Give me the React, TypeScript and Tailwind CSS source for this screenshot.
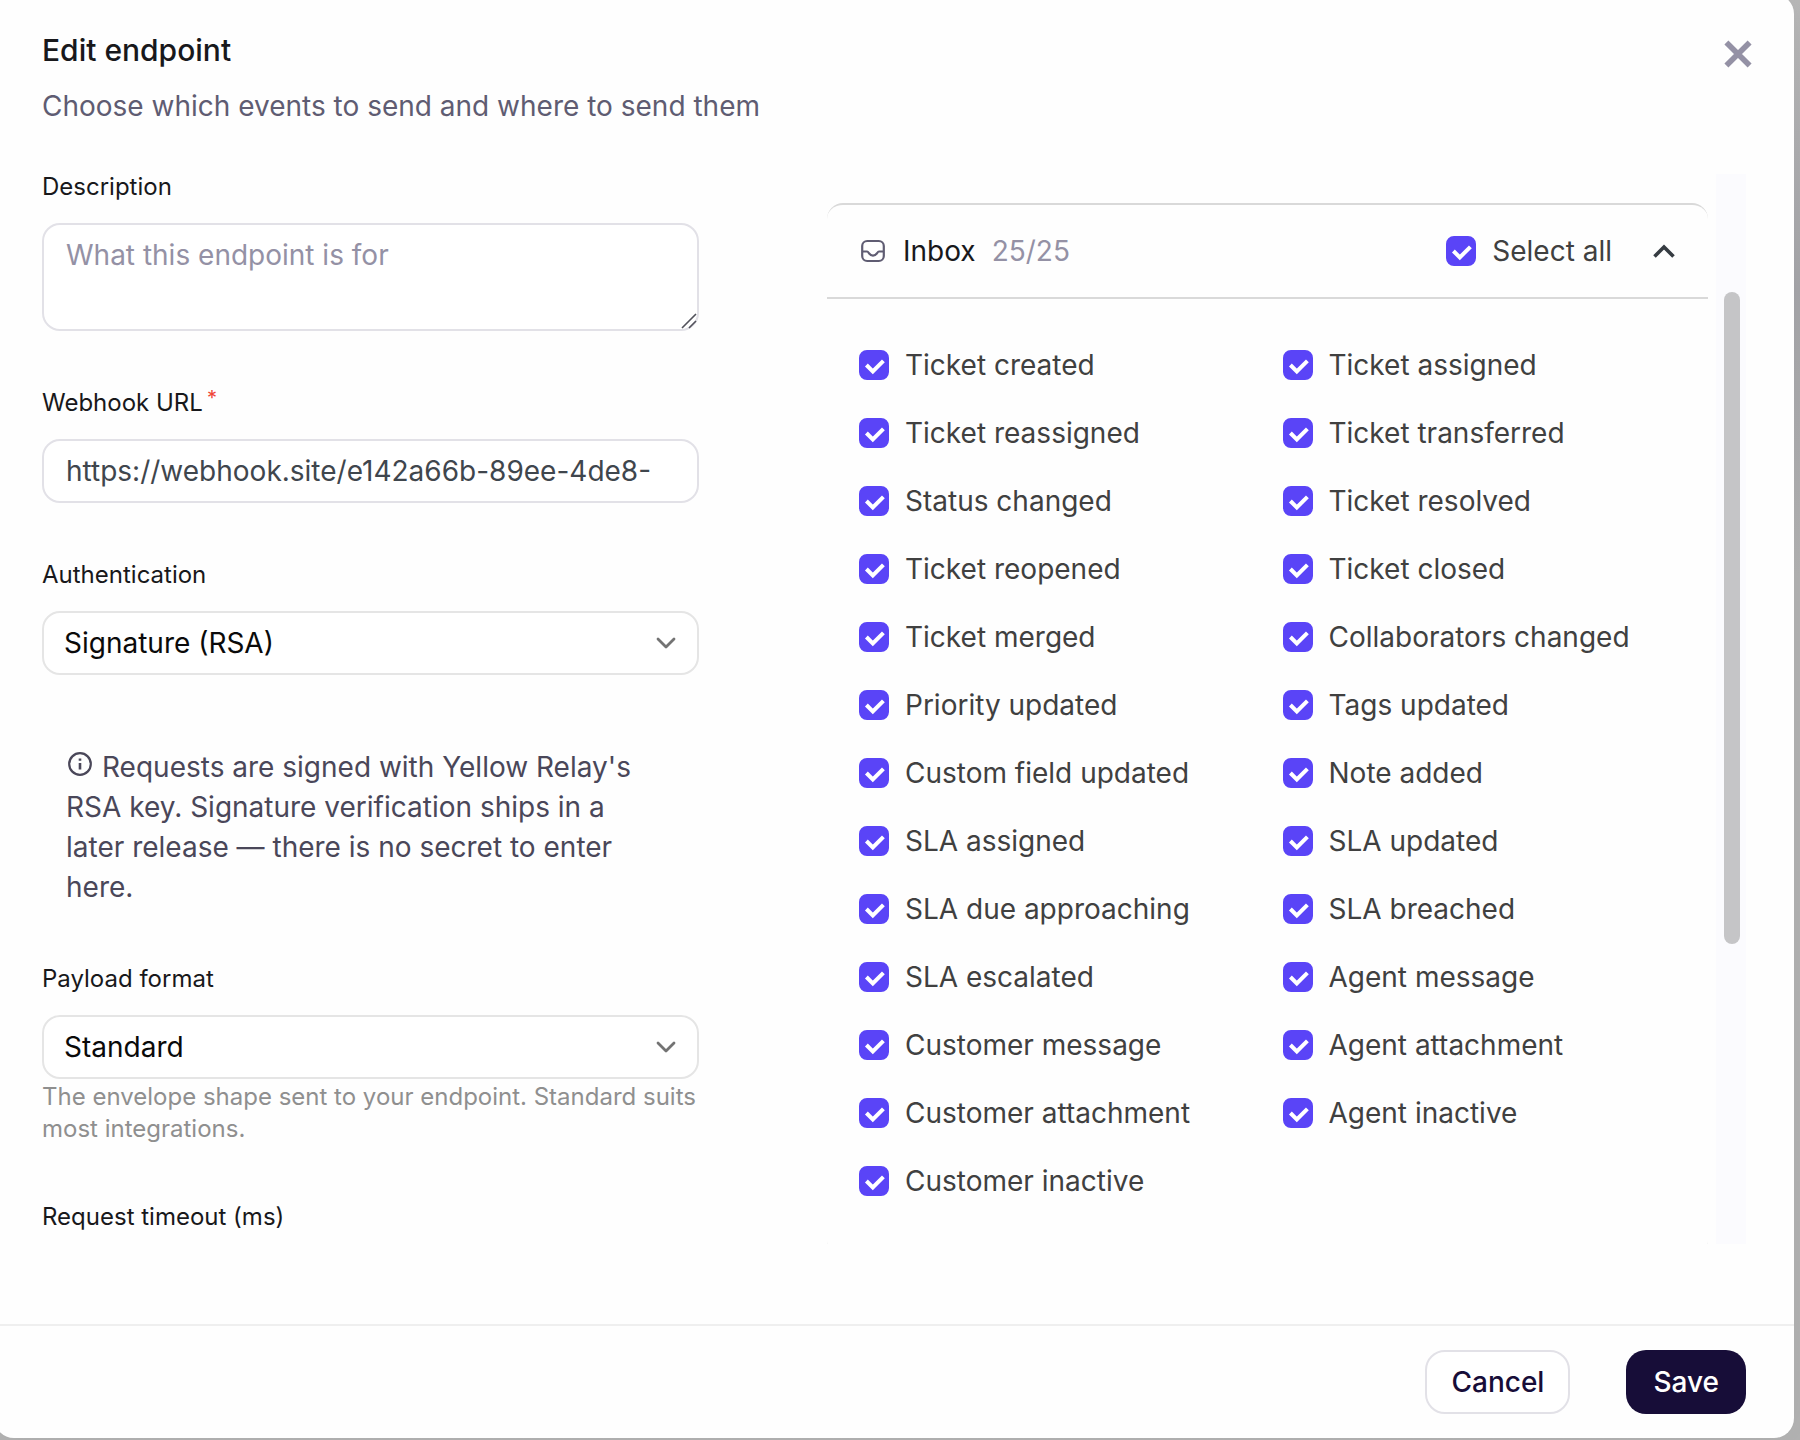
import type { ReactNode } from 'react'
import { useState } from 'react'

const EVENTS = [
  'Ticket created',
  'Ticket assigned',
  'Ticket reassigned',
  'Ticket transferred',
  'Status changed',
  'Ticket resolved',
  'Ticket reopened',
  'Ticket closed',
  'Ticket merged',
  'Collaborators changed',
  'Priority updated',
  'Tags updated',
  'Custom field updated',
  'Note added',
  'SLA assigned',
  'SLA updated',
  'SLA due approaching',
  'SLA breached',
  'SLA escalated',
  'Agent message',
  'Customer message',
  'Agent attachment',
  'Customer attachment',
  'Agent inactive',
  'Customer inactive',
]

function Checkbox({
  label,
  checked,
  onChange,
}: {
  label: string
  checked: boolean
  onChange: () => void
}) {
  return (
    <label className="flex items-center gap-4 text-[28px] leading-9 text-[#404040]">
      <span className="relative flex size-[30px] shrink-0">
        <input
          type="checkbox"
          checked={checked}
          onChange={onChange}
          className="peer size-full appearance-none rounded-lg border-2 border-[#d4d4d8] bg-white checked:border-[#5a44f7] checked:bg-[#5a44f7]"
        />
        <svg
          viewBox="0 0 30 30"
          fill="none"
          stroke="white"
          strokeWidth="4"
          className="pointer-events-none absolute inset-0 hidden peer-checked:block"
        >
          <path d="M7.4 15l6.4 6.4L24.4 10.8" />
        </svg>
      </span>
      {label}
    </label>
  )
}

function Field({
  id,
  label,
  required,
  children,
}: {
  id: string
  label: string
  required?: boolean
  children: ReactNode
}) {
  return (
    <div className="flex flex-col gap-[22px]">
      <label htmlFor={id} className="flex gap-1 text-2xl leading-[29px] text-[#18181b]">
        {label}
        {required && <span className="text-xl leading-5 text-[#f04438]">*</span>}
      </label>
      {children}
    </div>
  )
}

function Select({ id, options }: { id: string; options: string[] }) {
  return (
    <div className="relative flex">
      <select
        id={id}
        className="h-16 w-full appearance-none rounded-[18px] border-2 border-[#e5e5e5] bg-white px-5 text-[28px] text-[#0a0a0a]"
      >
        {options.map((o) => (
          <option key={o}>{o}</option>
        ))}
      </select>
      <svg
        viewBox="0 0 24 24"
        fill="none"
        stroke="#737373"
        strokeWidth="2.8"
        strokeLinecap="round"
        strokeLinejoin="round"
        className="pointer-events-none absolute top-5 right-5 size-6"
      >
        <path d="M3 8l8 8 8-8" />
      </svg>
    </div>
  )
}

export default function App() {
  const [selected, setSelected] = useState<string[]>(EVENTS)
  const [open, setOpen] = useState(true)
  const allSelected = selected.length === EVENTS.length

  const toggle = (name: string) =>
    setSelected((s) => (s.includes(name) ? s.filter((n) => n !== name) : [...s, name]))

  return (
    <div className="h-screen overflow-hidden bg-linear-to-b from-[#b9b9b9] via-[#a6a6aa] via-20% to-[#b3b3b3] to-40% pr-1.5 pb-0.5 font-[Inter,sans-serif]">
      <div
        role="dialog"
        aria-labelledby="dialog-title"
        className="-mt-1.5 -ml-1.5 flex h-[calc(100%+6px)] flex-col rounded-[20px] bg-[#fefefe] shadow-[0_0_40px_rgba(0,0,0,0.06)]"
      >
        <header className="flex items-start justify-between pt-9 pr-[38px] pb-12 pl-12">
          <div className="flex flex-col gap-4">
            <h1 id="dialog-title" className="text-[30px] leading-10 font-medium text-[#18181b]">
              Edit endpoint
            </h1>
            <p className="text-[28px] leading-10 text-[#5f5c72]">
              Choose which events to send and where to send them
            </p>
          </div>
          <button type="button" aria-label="Close" className="mt-1.5 p-1">
            <svg
              viewBox="0 0 28 28"
              fill="none"
              stroke="#9491a5"
              strokeWidth="5.6"
              className="size-7"
            >
              <path d="M2.4 2.4l23.2 23.2M25.6 2.4L2.4 25.6" />
            </svg>
          </button>
        </header>

        <div className="flex min-h-0 flex-1 px-12">
          <div className="-mt-0.5 flex w-[657px] shrink-0 flex-col gap-[57px] overflow-hidden">
            <Field id="description" label="Description">
              <div className="relative flex">
                <textarea
                  id="description"
                  placeholder="What this endpoint is for"
                  className="h-27 w-full resize-none rounded-[18px] border-2 border-[#e2e1e7] bg-white px-[22px] py-2.5 text-[28px] leading-10 placeholder:text-[#9491a5]"
                />
                <svg
                  viewBox="0 0 16 16"
                  stroke="#52525b"
                  strokeWidth="1.6"
                  className="pointer-events-none absolute right-0.5 bottom-0.5 size-4"
                >
                  <path d="M1 15L15 1M8 15l7-7" />
                </svg>
              </div>
            </Field>

            <Field id="url" label="Webhook URL" required>
              <input
                id="url"
                type="text"
                defaultValue="https://webhook.site/e142a66b-89ee-4de8-"
                className="h-16 w-full rounded-[18px] border-2 border-[#e2e1e7] bg-white px-[22px] text-[28px] text-[#3f464d]"
              />
            </Field>

            <Field id="auth" label="Authentication">
              <Select id="auth" options={['Signature (RSA)', 'None']} />
            </Field>

            <p className="pt-[15px] pr-12 pl-6 text-[28px] leading-10 text-[#4a4759]">
              <svg
                viewBox="0 0 24 24"
                fill="none"
                stroke="currentColor"
                strokeWidth="2.2"
                className="mr-2.5 mb-2.5 ml-0.5 inline size-6"
              >
                <circle cx="12" cy="12" r="10.8" />
                <path d="M12 11v6.5M12 6.5v2.2" strokeWidth="2.6" />
              </svg>
              Requests are signed with Yellow Relay's RSA key. Signature verification ships in a later
              release — there is no secret to enter here.
            </p>

            <div className="flex flex-col gap-0.5">
              <Field id="format" label="Payload format">
                <Select id="format" options={['Standard', 'Minimal']} />
              </Field>
              <p className="text-2xl leading-8 text-[#8f8f8f]">
                The envelope shape sent to your endpoint. Standard suits most integrations.
              </p>
            </div>

            <Field id="timeout" label="Request timeout (ms)">
              <input
                id="timeout"
                type="text"
                className="h-16 w-full shrink-0 rounded-[18px] border-2 border-[#e2e1e7] bg-white px-[22px] text-[28px]"
              />
            </Field>
          </div>

          <div className="ml-32 flex min-w-0 flex-1 gap-2">
            <div className="min-w-0 flex-1 overflow-hidden pt-[29px]">
              <section className="rounded-2xl border-y-2 border-[#d9d9d9]">
                <div className="flex h-[94px] items-center justify-between border-b-2 border-[#d9d9d9] px-8">
                  <div className="flex items-center gap-4 text-[28px] leading-9">
                    <svg
                      viewBox="0 0 24 24"
                      fill="none"
                      stroke="#5f5c72"
                      strokeWidth="2.2"
                      className="mx-0.5 size-6"
                    >
                      <rect x="1.2" y="2" width="21.6" height="20" rx="5" />
                      <path d="M1 12.5h5c2 0 2 4.2 6 4.2s4-4.2 6-4.2h5" />
                    </svg>
                    <h2 className="text-[#18181b]">Inbox</h2>
                    <span className="text-[#9491a5]">
                      {selected.length}/{EVENTS.length}
                    </span>
                  </div>
                  <div className="flex items-center gap-10">
                    <Checkbox
                      label="Select all"
                      checked={allSelected}
                      onChange={() => setSelected(allSelected ? [] : EVENTS)}
                    />
                    <button type="button" aria-label="Toggle Inbox" onClick={() => setOpen(!open)}>
                      <svg
                        viewBox="0 0 24 24"
                        fill="none"
                        stroke="#363c42"
                        strokeWidth="3.6"
                        className="size-6"
                      >
                        <path d="M2.5 17.5L12 8l9.5 9.5" />
                      </svg>
                    </button>
                  </div>
                </div>
                {open && (
                  <div className="grid grid-cols-2 gap-x-[30px] gap-y-8 px-8 pt-12 pb-14">
                    {EVENTS.map((name) => (
                      <Checkbox
                        key={name}
                        label={name}
                        checked={selected.includes(name)}
                        onChange={() => toggle(name)}
                      />
                    ))}
                  </div>
                )}
              </section>
            </div>
            <div className="w-[30px] shrink-0 bg-[#fbfbfe] pr-1.5 pl-2">
              <div className="h-[11%]" />
              <div className="h-[61%] rounded-full bg-[#c5c5c7]" />
            </div>
          </div>
        </div>

        <footer className="mt-20 flex justify-end gap-14 border-t-2 border-[#efefef] pt-6 pr-12 pb-6">
          <button
            type="button"
            className="h-16 rounded-[20px] border-2 border-[#e2e1e7] bg-white px-6 text-[28px] font-medium text-[#170d38]"
          >
            Cancel
          </button>
          <button
            type="button"
            className="h-16 rounded-[20px] bg-[#170d38] px-[27px] text-[28px] font-medium text-white"
          >
            Save
          </button>
        </footer>
      </div>
    </div>
  )
}
